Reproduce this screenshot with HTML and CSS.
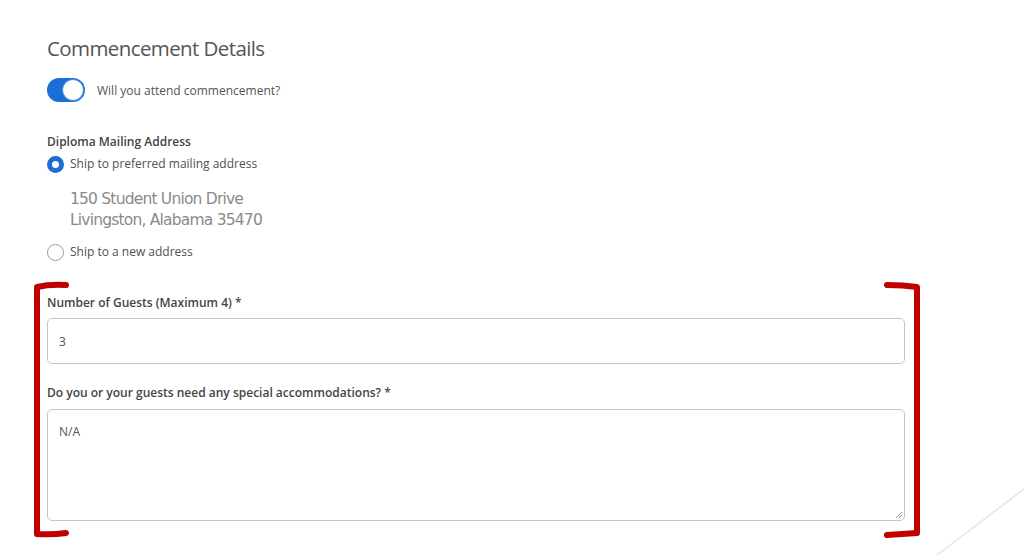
FILE: index.html
```html
<!DOCTYPE html>
<html lang="en">
<head>
<meta charset="utf-8">
<title>Commencement Details</title>
<link rel="stylesheet" href="styles.css">
</head>
<body>
<main class="page">
  <h1 class="title">Commencement Details</h1>

  <div class="toggle-row">
    <span class="toggle"><span class="knob"></span></span>
    <span class="toggle-label">Will you attend commencement?</span>
  </div>

  <div class="group-label">Diploma Mailing Address</div>
  <div class="radio-row">
    <span class="radio checked"></span>
    <span class="radio-label">Ship to preferred mailing address</span>
  </div>
  <div class="address">
    <div>150 Student Union Drive</div>
    <div>Livingston, Alabama 35470</div>
  </div>
  <div class="radio-row second">
    <span class="radio"></span>
    <span class="radio-label">Ship to a new address</span>
  </div>

  <div class="field-label guests">Number of Guests (Maximum 4) *</div>
  <div class="input">3</div>

  <div class="field-label accom">Do you or your guests need any special accommodations? *</div>
  <div class="textarea">N/A
    <svg class="grip" width="10" height="10" viewBox="0 0 10 10"><path d="M9 3 L3 9 M9 6 L6 9" stroke="#9a9a9a" stroke-width="1" fill="none"/></svg>
  </div>

  <svg class="annot" width="1024" height="555" viewBox="0 0 1024 555">
    <path d="M937 555 L1024 489" stroke="#e6e6e6" stroke-width="1.5" fill="none"/>
    <path d="M66 285 Q50 284 37 287 L37 534 Q52 535 66 533" stroke="#c00000" stroke-width="6" fill="none" stroke-linecap="round" stroke-linejoin="round"/>
    <path d="M887 285 Q903 285 917 287 L917 533 Q902 534 887 535" stroke="#c00000" stroke-width="6" fill="none" stroke-linecap="round" stroke-linejoin="round"/>
  </svg>
</main>
</body>
</html>
```

FILE: styles.css
```css
* { box-sizing: border-box; }
html, body { margin: 0; padding: 0; background: #fff; }
body {
  font-family: "Open Sans", "Noto Sans", sans-serif;
  width: 1024px;
  height: 555px;
  overflow: hidden;
}
.page {
  position: relative;
  width: 1024px;
  height: 555px;
  padding: 30px 0 0 47px;
  display: flex;
  flex-direction: column;
  align-items: flex-start;
}
.title {
  margin: 0;
  font-size: 20.5px;
  letter-spacing: -0.6px;
  line-height: 36px;
  font-weight: 400;
  color: #555;
}
.toggle-row {
  margin-top: 12px;
  display: flex;
  align-items: center;
  gap: 12px;
  height: 24px;
}
.toggle {
  width: 38px;
  height: 24px;
  border-radius: 12px;
  background: #1b6ed6;
  display: flex;
  align-items: center;
  justify-content: flex-end;
  padding-right: 1px;
}
.knob {
  width: 22px;
  height: 22px;
  border-radius: 50%;
  background: #fff;
  border: 1.5px solid #4a8fe0;
}
.toggle-label {
  font-size: 12px;
  color: #555;
  line-height: 18px;
  margin-top: 2px;
}
.group-label, .field-label {
  font-size: 12px;
  font-weight: 600;
  color: #454545;
  line-height: 18px;
}
.group-label { margin-top: 31px; }
.radio-row {
  margin-top: 4px;
  display: flex;
  align-items: center;
  gap: 6px;
  height: 18px;
}
.radio-row.second { margin-top: 12px; }
.radio {
  width: 17px;
  height: 17px;
  border-radius: 50%;
  border: 1px solid #9a9a9a;
  background: #fff;
}
.radio.checked {
  border: 5px solid #1b6ed6;
}
.radio-label {
  font-size: 12px;
  color: #505050;
  line-height: 18px;
}
.address {
  margin-top: 16px;
  padding-left: 23px;
  font-family: "DejaVu Sans", sans-serif;
  font-weight: 400;
  font-size: 15.5px;
  letter-spacing: -0.8px;
  line-height: 21px;
  color: #8a8a8a;
}
.field-label.guests { margin-top: 33px; }
.field-label.accom { margin-top: 20px; }
.input, .textarea {
  width: 858px;
  border: 1px solid #c6c6c6;
  border-radius: 5px;
  background: #fff;
  font-size: 12px;
  color: #555;
  padding-left: 11px;
}
.input {
  margin-top: 6px;
  height: 46px;
  display: flex;
  align-items: center;
}
.textarea {
  position: relative;
  margin-top: 7px;
  height: 112px;
  padding-top: 13px;
  line-height: 18px;
}
.grip {
  position: absolute;
  right: 1px;
  bottom: 1px;
}
.annot {
  position: absolute;
  left: 0;
  top: 0;
  pointer-events: none;
}
```
